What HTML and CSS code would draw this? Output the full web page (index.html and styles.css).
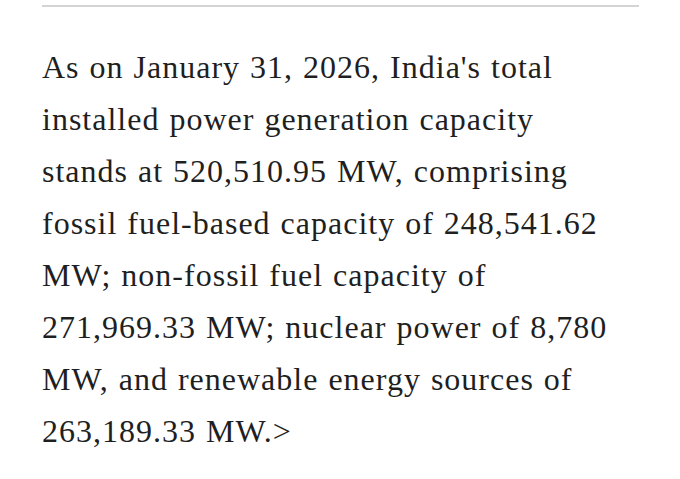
FILE: index.html
```html
<!DOCTYPE html>
<html lang="en">
<head>
<meta charset="utf-8">
<link rel="stylesheet" href="styles.css">
</head>
<body>
<article class="article">
  <hr class="divider">
  <p class="body-text">As on January 31, 2026, India's total<br>
installed power generation capacity<br>
stands at 520,510.95 MW, comprising<br>
fossil fuel-based capacity of 248,541.62<br>
MW; non-fossil fuel capacity of<br>
271,969.33 MW; nuclear power of 8,780<br>
MW, and renewable energy sources of<br>
263,189.33 MW.&gt;</p>
</article>
</body>
</html>
```
FILE: styles.css
```css
html, body {
  margin: 0;
  padding: 0;
  background: #ffffff;
}
.article {
  width: 597px;
  padding: 5px 0 0 42px;
}
.divider {
  margin: 0;
  border: 0;
  height: 2px;
  background: #d4d4d4;
}
.body-text {
  margin: 34px 0 0;
  font-family: "Liberation Serif", "Times New Roman", serif;
  font-size: 32px;
  letter-spacing: 1px;
  word-spacing: 1px;
  line-height: 52px;
  color: #1f1f1f;
  white-space: nowrap;
}
```
